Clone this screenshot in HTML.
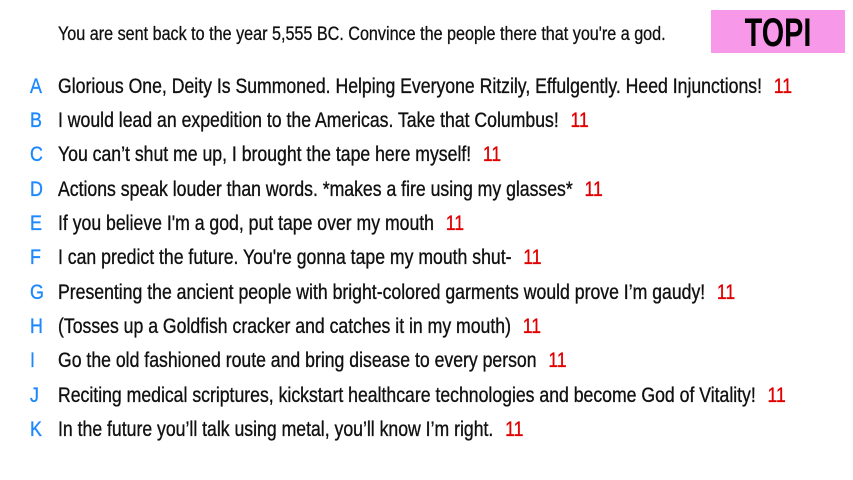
<!DOCTYPE html>
<html><head><style>
body{margin:0;width:853px;height:480px;background:#fff;position:relative;overflow:hidden;font-family:"Liberation Sans",sans-serif;color:#111;}
.h{position:absolute;left:58px;top:24px;font-size:19px;white-space:nowrap;transform:scaleX(0.85);transform-origin:left center;-webkit-text-stroke:0.3px #111;}
.topi{position:absolute;left:711px;top:10px;width:134px;height:43px;background:#f799e8;}
.topi span{position:absolute;left:0;right:0;top:2px;text-align:center;font-size:40px;font-weight:bold;line-height:43px;color:#000;transform:scaleX(0.72);}
.r{position:absolute;left:0;font-size:21px;white-space:nowrap;height:30px;line-height:30px;width:900px;-webkit-text-stroke:0.35px currentColor;}
.l{position:absolute;left:30px;color:#1e88ff;transform:scaleX(0.85);transform-origin:left center;}
.t{position:absolute;left:58px;transform:scaleX(0.84);transform-origin:left center;}
.n{color:#e00000;margin-left:14px;}
</style></head><body>
<div class="h">You are sent back to the year 5,555 BC. Convince the people there that you're a god.</div>
<div class="topi"><span>TOPI</span></div>
<div class="r" style="top:72px"><span class="l">A</span><span class="t">Glorious One, Deity Is Summoned. Helping Everyone Ritzily, Effulgently. Heed Injunctions!<span class="n">11</span></span></div>
<div class="r" style="top:106px"><span class="l">B</span><span class="t">I would lead an expedition to the Americas. Take that Columbus!<span class="n">11</span></span></div>
<div class="r" style="top:140px"><span class="l">C</span><span class="t">You can’t shut me up, I brought the tape here myself!<span class="n">11</span></span></div>
<div class="r" style="top:175px"><span class="l">D</span><span class="t">Actions speak louder than words. *makes a fire using my glasses*<span class="n">11</span></span></div>
<div class="r" style="top:209px"><span class="l">E</span><span class="t">If you believe I'm a god, put tape over my mouth<span class="n">11</span></span></div>
<div class="r" style="top:243px"><span class="l">F</span><span class="t">I can predict the future. You're gonna tape my mouth shut-<span class="n">11</span></span></div>
<div class="r" style="top:278px"><span class="l">G</span><span class="t">Presenting the ancient people with bright-colored garments would prove I’m gaudy!<span class="n">11</span></span></div>
<div class="r" style="top:312px"><span class="l">H</span><span class="t">(Tosses up a Goldfish cracker and catches it in my mouth)<span class="n">11</span></span></div>
<div class="r" style="top:346px"><span class="l">I</span><span class="t">Go the old fashioned route and bring disease to every person<span class="n">11</span></span></div>
<div class="r" style="top:381px"><span class="l">J</span><span class="t">Reciting medical scriptures, kickstart healthcare technologies and become God of Vitality!<span class="n">11</span></span></div>
<div class="r" style="top:415px"><span class="l">K</span><span class="t">In the future you’ll talk using metal, you’ll know I’m right.<span class="n">11</span></span></div>
</body></html>
